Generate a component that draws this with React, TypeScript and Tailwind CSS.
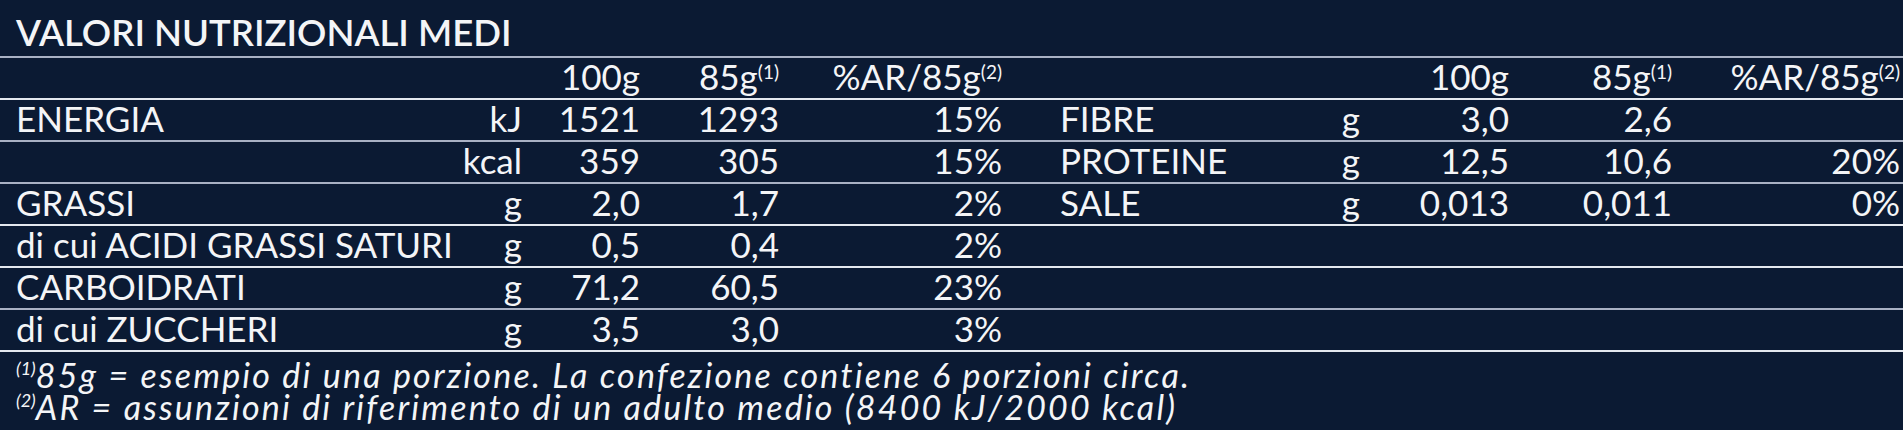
import React from 'react';

type Row = {
  left: [string, string, string, string, string];
  right: [string, string, string, string, string];
  line: string;
};

const Sup: React.FC<{ n: string }> = ({ n }) => (
  <span className="text-[19px] leading-none align-[11px]">({n})</span>
);

const rows: Row[] = [
  { left: ['ENERGIA', 'kJ', '1521', '1293', '15%'], right: ['FIBRE', 'g', '3,0', '2,6', ''], line: 'border-[#e4e8ef]' },
  { left: ['', 'kcal', '359', '305', '15%'], right: ['PROTEINE', 'g', '12,5', '10,6', '20%'], line: 'border-[#a9b1c4]' },
  { left: ['GRASSI', 'g', '2,0', '1,7', '2%'], right: ['SALE', 'g', '0,013', '0,011', '0%'], line: 'border-[#a9b1c4]' },
  { left: ['di cui ACIDI GRASSI SATURI', 'g', '0,5', '0,4', '2%'], right: ['', '', '', '', ''], line: 'border-[#e4e8ef]' },
  { left: ['CARBOIDRATI', 'g', '71,2', '60,5', '23%'], right: ['', '', '', '', ''], line: 'border-[#e4e8ef]' },
  { left: ['di cui ZUCCHERI', 'g', '3,5', '3,0', '3%'], right: ['', '', '', '', ''], line: 'border-[#a9b1c4]' },
];

const grid =
  'grid grid-cols-[444px_62px_118px_139px_223px_298px_60px_149px_163px_228px] pl-[16px] pr-[3px] h-[42px] border-t-2 leading-[36px] whitespace-nowrap';

const App: React.FC = () => {
  return (
    <div
      className="w-[1903px] h-[430px] overflow-hidden bg-[#0b1a33] text-[#f4f5f7]"
      style={{ fontFamily: 'Lato, "Noto Sans", sans-serif' }}
    >
      <div className="h-[56px] pl-[16px] pt-[10px] text-[36.5px] leading-[44px] font-semibold">
        VALORI NUTRIZIONALI MEDI
      </div>

      <div className="text-[35px]">
        <div className={`${grid} border-[#a9b1c4]`}>
          <div />
          <div />
          <div className="text-right">100g</div>
          <div className="text-right">85g<Sup n="1" /></div>
          <div className="text-right">%AR/85g<Sup n="2" /></div>
          <div />
          <div />
          <div className="text-right">100g</div>
          <div className="text-right">85g<Sup n="1" /></div>
          <div className="text-right">%AR/85g<Sup n="2" /></div>
        </div>

        {rows.map((r, i) => (
          <div key={i} className={`${grid} ${r.line}`}>
            <div>{r.left[0]}</div>
            <div className="text-right">{r.left[1]}</div>
            <div className="text-right">{r.left[2]}</div>
            <div className="text-right">{r.left[3]}</div>
            <div className="text-right">{r.left[4]}</div>
            <div className="pl-[58px]">{r.right[0]}</div>
            <div className="text-right">{r.right[1]}</div>
            <div className="text-right">{r.right[2]}</div>
            <div className="text-right">{r.right[3]}</div>
            <div className="text-right">{r.right[4]}</div>
          </div>
        ))}
      </div>

      <div className="border-t-2 border-[#e4e8ef] pl-[16px] pt-[7px] italic text-[34px] leading-[32px] tracking-[2.2px] whitespace-nowrap">
        <div>
          <span className="text-[18px] leading-none align-[13px] tracking-normal">(1)</span>85g = esempio di una porzione. La confezione contiene 6 porzioni circa.
        </div>
        <div>
          <span className="text-[18px] leading-none align-[13px] tracking-normal">(2)</span>AR = assunzioni di riferimento di un adulto medio (8400 kJ/2000 kcal)
        </div>
      </div>
    </div>
  );
};

export default App;
